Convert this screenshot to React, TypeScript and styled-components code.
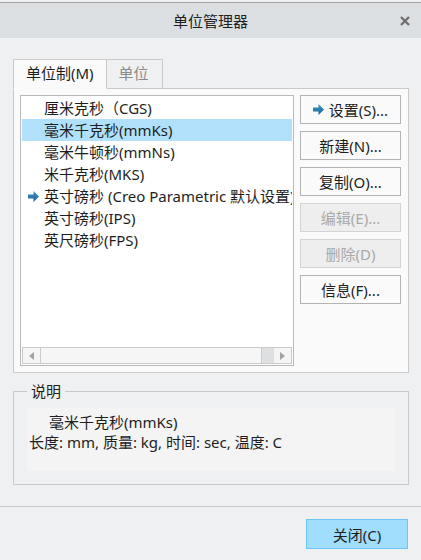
import React from "react";
import styled, { createGlobalStyle } from "styled-components";

const GlobalStyle = createGlobalStyle`
  html, body {
    margin: 0;
    padding: 0;
    background: #eff0f2;
  }
  body {
    font-family: "Noto Sans", "Noto Sans CJK SC", sans-serif;
    font-size: 15px;
    color: #1e1e1e;
  }
`;

const Window = styled.div`
  width: 421px;
  height: 560px;
  display: flex;
  flex-direction: column;
  background: #eff0f2;
  overflow: hidden;
`;

const TitleBar = styled.div`
  margin-top: 2px;
  height: 35px;
  border-top: 1px solid #a6a6a6;
  background: #dcdfe1;
  display: flex;
  align-items: center;
  justify-content: center;
  position: relative;
  font-size: 15px;
  color: #202020;
`;

const CloseX = styled.button`
  position: absolute;
  right: 11px;
  top: 13px;
  width: 10px;
  height: 10px;
  padding: 0;
  border: 0;
  background: none;
  display: flex;
`;

const Body = styled.div`
  padding: 21px 12px 0 13px;
  display: flex;
  flex-direction: column;
`;

const TabStrip = styled.div`
  display: flex;
  height: 30px;
  margin-bottom: -1px;
  position: relative;
  z-index: 1;
`;

const Tab = styled.div<{ $active?: boolean }>`
  height: 30px;
  box-sizing: border-box;
  padding: 0 ${(p) => (p.$active ? "12px" : "13px")} 1px 12px;
  border: 1px solid #c9c9c9;
  border-bottom: 1px solid ${(p) => (p.$active ? "#fafafa" : "#c9c9c9")};
  border-left: ${(p) => (p.$active ? "1px solid #c9c9c9" : "none")};
  background: ${(p) => (p.$active ? "#fafafa" : "#eff0f2")};
  color: ${(p) => (p.$active ? "#1e1e1e" : "#8a8a8a")};
  display: flex;
  align-items: center;
  line-height: 1;
`;

const Panel = styled.div`
  height: 285px;
  box-sizing: border-box;
  border: 1px solid #c9c9c9;
  background: #fafafa;
  padding: 6px 7px 6px 6px;
  display: flex;
  gap: 6px;
`;

const ListBox = styled.div`
  width: 274px;
  box-sizing: border-box;
  border: 1px solid #b9b9b9;
  background: #ffffff;
  padding: 1px;
  display: flex;
  flex-direction: column;
`;

const Items = styled.div`
  flex: 1;
  overflow: hidden;
`;

const Item = styled.div<{ $selected?: boolean }>`
  height: 22px;
  line-height: 22px;
  white-space: nowrap;
  overflow: hidden;
  padding-left: 6px;
  display: flex;
  align-items: center;
  background: ${(p) => (p.$selected ? "#b1e1fa" : "transparent")};
`;

const ArrowSlot = styled.span`
  width: 16px;
  flex: none;
  display: flex;
  align-items: center;
`;

const HScroll = styled.div`
  height: 17px;
  box-sizing: border-box;
  border: 1px solid #cbcbcb;
  background: #f3f3f3;
  display: flex;
`;

const ScrollBtn = styled.div`
  width: 17px;
  flex: none;
  display: flex;
  align-items: center;
  justify-content: center;
  background: #f5f5f5;
`;

const Thumb = styled.div`
  width: 222px;
  flex: none;
  box-sizing: border-box;
  border-left: 1px solid #cbcbcb;
  border-right: 1px solid #cbcbcb;
  background: #f6f6f6;
`;

const Track = styled.div`
  flex: 1;
  background: #dedfe0;
`;

const ButtonCol = styled.div`
  width: 101px;
  display: flex;
  flex-direction: column;
  gap: 7px;
`;

const SideButton = styled.button<{ $disabled?: boolean }>`
  height: 29px;
  box-sizing: border-box;
  border: 1px solid ${(p) => (p.$disabled ? "#d3d3d3" : "#b3b3b3")};
  background: ${(p) => (p.$disabled ? "#eeeeee" : "#fafafa")};
  color: ${(p) => (p.$disabled ? "#a9a9a9" : "#1e1e1e")};
  font: inherit;
  padding: 0;
  display: flex;
  align-items: center;
  justify-content: center;
  gap: 5px;
`;

const Group = styled.fieldset`
  margin: 9px 0 0 0;
  padding: 8px 13px 13px 13px;
  border: 1px solid #c9c9c9;
  min-width: 0;
`;

const Legend = styled.legend`
  padding: 0 4px;
  line-height: 18px;
  color: #1e1e1e;
`;

const DescBox = styled.div`
  height: 63px;
  box-sizing: border-box;
  background: #f4f4f4;
  padding: 4px 2px 0 2px;
  line-height: 20px;
  white-space: nowrap;
`;

const DescTitle = styled.div`
  padding-left: 20px;
`;

const Separator = styled.div`
  margin-top: 21px;
  height: 1px;
  background: #c8c8c8;
`;

const Footer = styled.div`
  display: flex;
  justify-content: flex-end;
  padding: 12px 13px 0 0;
`;

const PrimaryButton = styled.button`
  width: 102px;
  height: 30px;
  box-sizing: border-box;
  border: 1px solid #6ec5f4;
  background: #a1ddfc;
  color: #1e1e1e;
  font: inherit;
  padding: 0;
`;

const BlueArrow: React.FC = () => (
  <svg width="11" height="11" viewBox="0 0 11 11">
    <defs>
      <linearGradient id="ba" x1="0" y1="0" x2="0" y2="1">
        <stop offset="0" stopColor="#3f98d0" />
        <stop offset="1" stopColor="#1b5f92" />
      </linearGradient>
    </defs>
    <path d="M0 3.5H5.5V0L11 5.5L5.5 11V7.5H0Z" fill="url(#ba)" />
  </svg>
);

const units = [
  { name: "厘米克秒（CGS)" },
  { name: "毫米千克秒(mmKs)", selected: true },
  { name: "毫米牛顿秒(mmNs)" },
  { name: "米千克秒(MKS)" },
  { name: "英寸磅秒 (Creo Parametric 默认设置)", current: true },
  { name: "英寸磅秒(IPS)" },
  { name: "英尺磅秒(FPS)" },
];

const actions = [
  { label: "设置(S)...", arrow: true },
  { label: "新建(N)..." },
  { label: "复制(O)..." },
  { label: "编辑(E)...", disabled: true },
  { label: "删除(D)", disabled: true },
  { label: "信息(F)..." },
];

export default function App() {
  return (
    <Window>
      <GlobalStyle />
      <TitleBar>
        单位管理器
        <CloseX aria-label="close">
          <svg width="10" height="10" viewBox="0 0 10 10">
            <path d="M1 1L9 9M9 1L1 9" stroke="#6f6f6f" strokeWidth="2.4" />
          </svg>
        </CloseX>
      </TitleBar>
      <Body>
        <TabStrip>
          <Tab $active>单位制(M)</Tab>
          <Tab>单位</Tab>
        </TabStrip>
        <Panel>
          <ListBox>
            <Items>
              {units.map((u) => (
                <Item key={u.name} $selected={u.selected}>
                  <ArrowSlot>{u.current && <BlueArrow />}</ArrowSlot>
                  {u.name}
                </Item>
              ))}
            </Items>
            <HScroll>
              <ScrollBtn>
                <svg width="5" height="8" viewBox="0 0 5 8">
                  <path d="M5 0V8L0 4Z" fill="#a3a3a3" />
                </svg>
              </ScrollBtn>
              <Thumb />
              <Track />
              <ScrollBtn>
                <svg width="5" height="8" viewBox="0 0 5 8">
                  <path d="M0 0V8L5 4Z" fill="#a3a3a3" />
                </svg>
              </ScrollBtn>
            </HScroll>
          </ListBox>
          <ButtonCol>
            {actions.map((a) => (
              <SideButton key={a.label} $disabled={a.disabled}>
                {a.arrow && <BlueArrow />}
                {a.label}
              </SideButton>
            ))}
          </ButtonCol>
        </Panel>
        <Group>
          <Legend>说明</Legend>
          <DescBox>
            <DescTitle>毫米千克秒(mmKs)</DescTitle>
            <div>长度: mm, 质量: kg, 时间: sec, 温度: C</div>
          </DescBox>
        </Group>
      </Body>
      <Separator />
      <Footer>
        <PrimaryButton>关闭(C)</PrimaryButton>
      </Footer>
    </Window>
  );
}
